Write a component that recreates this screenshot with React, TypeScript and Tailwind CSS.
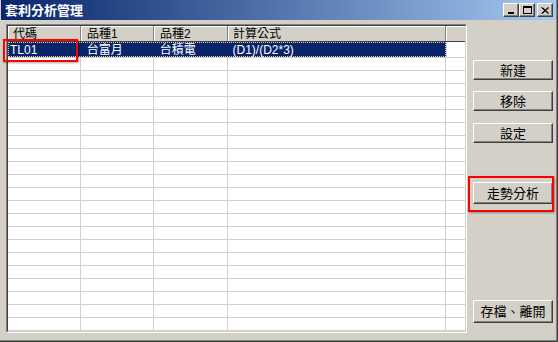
import React from "react";

const cols = [
  { w: "w-[73px]", head: "代碼", pad: "pl-[5px]", dataPad: "pl-[2px]" },
  { w: "w-[73px]", head: "品種1", pad: "pl-[6px]", dataPad: "pl-[6px]" },
  { w: "w-[74px]", head: "品種2", pad: "pl-[6px]", dataPad: "pl-[6px]" },
  { w: "w-[218px]", head: "計算公式", pad: "pl-[5px]", dataPad: "pl-[5px]" },
];

const selected = ["TL01", "台富月", "台積電", "(D1)/(D2*3)"];

const WinButton: React.FC<{ children: React.ReactNode }> = ({ children }) => (
  <div className="w-[16px] h-[14px] bg-[#d4d0c8] border-t border-l border-white border-r border-b border-r-[#404040] border-b-[#404040] shadow-[inset_-1px_-1px_#808080] flex items-center justify-center">
    {children}
  </div>
);

const Button: React.FC<{ label: string; className?: string }> = ({ label, className = "" }) => (
  <div
    className={`w-[80px] bg-[#d4d0c8] border-t border-l border-white border-r border-b border-r-[#404040] border-b-[#404040] shadow-[inset_-1px_-1px_#808080] flex items-center justify-center text-[13px] leading-[13px] text-black ${className}`}
  >
    {label}
  </div>
);

export default function App() {
  const rows = Array.from({ length: 22 });
  return (
    <div
      className="relative w-[558px] h-[342px] bg-[#d4d0c8] border-r border-b border-[#404040] shadow-[inset_-1px_-1px_#808080] flex flex-col overflow-hidden"
      style={{ fontFamily: '"Liberation Sans", "Noto Sans CJK TC", sans-serif' }}
    >
      {/* title bar */}
      <div className="h-[20px] mx-[1px] bg-gradient-to-r from-[#0a246a] to-[#a6caf0] flex items-center pl-[4px] pr-[3px]">
        <span className="text-white font-bold text-[13px] leading-[13px]">套利分析管理</span>
        <div className="ml-auto flex items-center">
          <WinButton>
            <div className="w-[6px] h-[2px] bg-black mt-[6px] -ml-[1px]" />
          </WinButton>
          <WinButton>
            <div className="w-[9px] h-[8px] border border-black border-t-2 -mt-[1px]" />
          </WinButton>
          <div className="w-[2px]" />
          <WinButton>
            <svg width="8" height="7" viewBox="0 0 8 7">
              <path d="M0.5 0.5 L7 6.5 M1.5 0.5 L8 6.5 M7 0.5 L0.5 6.5 M8 0.5 L1.5 6.5" stroke="black" strokeWidth="1" />
            </svg>
          </WinButton>
        </div>
      </div>

      <div className="flex flex-1 pt-[4px] pl-[6px]">
        {/* grid */}
        <div className="w-[461px] h-[309px] border-t border-l border-[#808080] border-r border-b border-r-white border-b-white">
          <div className="w-full h-full border-t border-l border-[#404040] border-r border-b border-r-[#d4d0c8] border-b-[#d4d0c8] bg-white overflow-hidden flex flex-col">
            {/* header */}
            <div className="flex h-[16px] shrink-0 border-b border-[#404040] text-[12px] leading-[12px] text-black">
              {cols.map((c) => (
                <div
                  key={c.head}
                  className={`${c.w} h-full bg-[#d4d0c8] border-r border-[#808080] shadow-[inset_1px_1px_white] flex items-center ${c.pad}`}
                >
                  {c.head}
                </div>
              ))}
              <div className="flex-1 h-full bg-[#d4d0c8] shadow-[inset_1px_1px_white]" />
            </div>
            {/* selected row */}
            <div className="flex h-[16px] shrink-0 border-b border-[#d4d0c8] text-[12px] leading-[12px]">
              <div className="flex h-full w-[438px] bg-[#0a246a] text-white border border-dotted border-[#d8d0a8]">
                {cols.map((c, i) => (
                  <div key={c.head} className={`${c.w} ${i === 0 ? "-ml-[1px]" : ""} h-full flex items-center ${c.dataPad}`}>
                    {selected[i]}
                  </div>
                ))}
              </div>
              <div className="flex-1 h-full border-l border-[#d4d0c8]" />
            </div>
            {rows.map((_, r) => (
              <div key={r} className="flex h-[13px] shrink-0 border-b border-[#d4d0c8]">
                {cols.map((c) => (
                  <div key={c.head} className={`${c.w} h-full border-r border-[#d4d0c8]`} />
                ))}
                <div className="flex-1 h-full" />
              </div>
            ))}
          </div>
        </div>

        {/* buttons */}
        <div className="ml-[6px] flex flex-col">
          <Button label="新建" className="mt-[36px] h-[20px]" />
          <Button label="移除" className="mt-[11px] h-[20px]" />
          <Button label="設定" className="mt-[12px] h-[20px]" />
          <Button label="走勢分析" className="mt-[39px] h-[22px]" />
          <Button label="存檔、離開" className="mt-[96px] h-[23px]" />
        </div>
      </div>

      {/* annotation boxes */}
      <div className="absolute left-[3px] top-[39px] w-[75px] h-[23px] border-2 border-[#ff0000] shadow-[1px_1px_2px_rgba(0,0,0,0.35)]" />
      <div className="absolute left-[468px] top-[176px] w-[86px] h-[36px] border-2 border-[#ff0000] shadow-[1px_1px_2px_rgba(0,0,0,0.35)]" />
    </div>
  );
}
